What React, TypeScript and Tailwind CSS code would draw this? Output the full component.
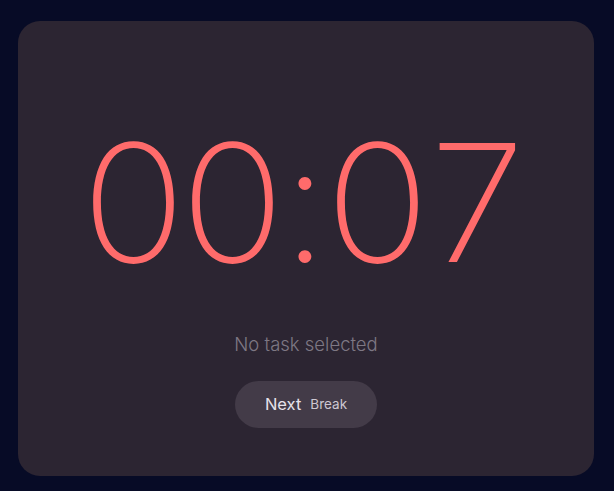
export default function App() {
  return (
    <div className="min-h-screen w-full bg-[#070b26] p-[18px] pt-[21px] font-['Inter',sans-serif]">
      <div className="flex h-[455px] w-[576px] flex-col items-center rounded-[22px] bg-[#2c2532]">
        {/* countdown, one fixed cell per glyph */}
        <div className="mt-[100px] flex text-[164px] leading-[164px] font-extralight text-[#ff6b6b]">
          <span className="flex w-[99px] justify-center scale-x-[1.05]">0</span>
          <span className="flex w-[99px] justify-center scale-x-[1.05]">0</span>
          <span className="flex w-[46px] justify-center">:</span>
          <span className="flex w-[99px] justify-center scale-x-[1.05]">0</span>
          <span className="flex w-[101px] justify-center scale-x-[1.05]">7</span>
        </div>
        <div className="mt-[45px] text-[18.5px] leading-[28px] font-light text-[#7e7884]">No task selected</div>
        <button className="mt-[23px] flex h-[47px] w-[142px] items-center justify-center gap-[9px] rounded-full bg-[#433b48]">
          <span className="text-[16.5px] font-normal text-[#e6e2ea]">Next</span>
          <span className="text-[13.5px] font-normal text-[#cdc7d1]">Break</span>
        </button>
      </div>
    </div>
  );
}
